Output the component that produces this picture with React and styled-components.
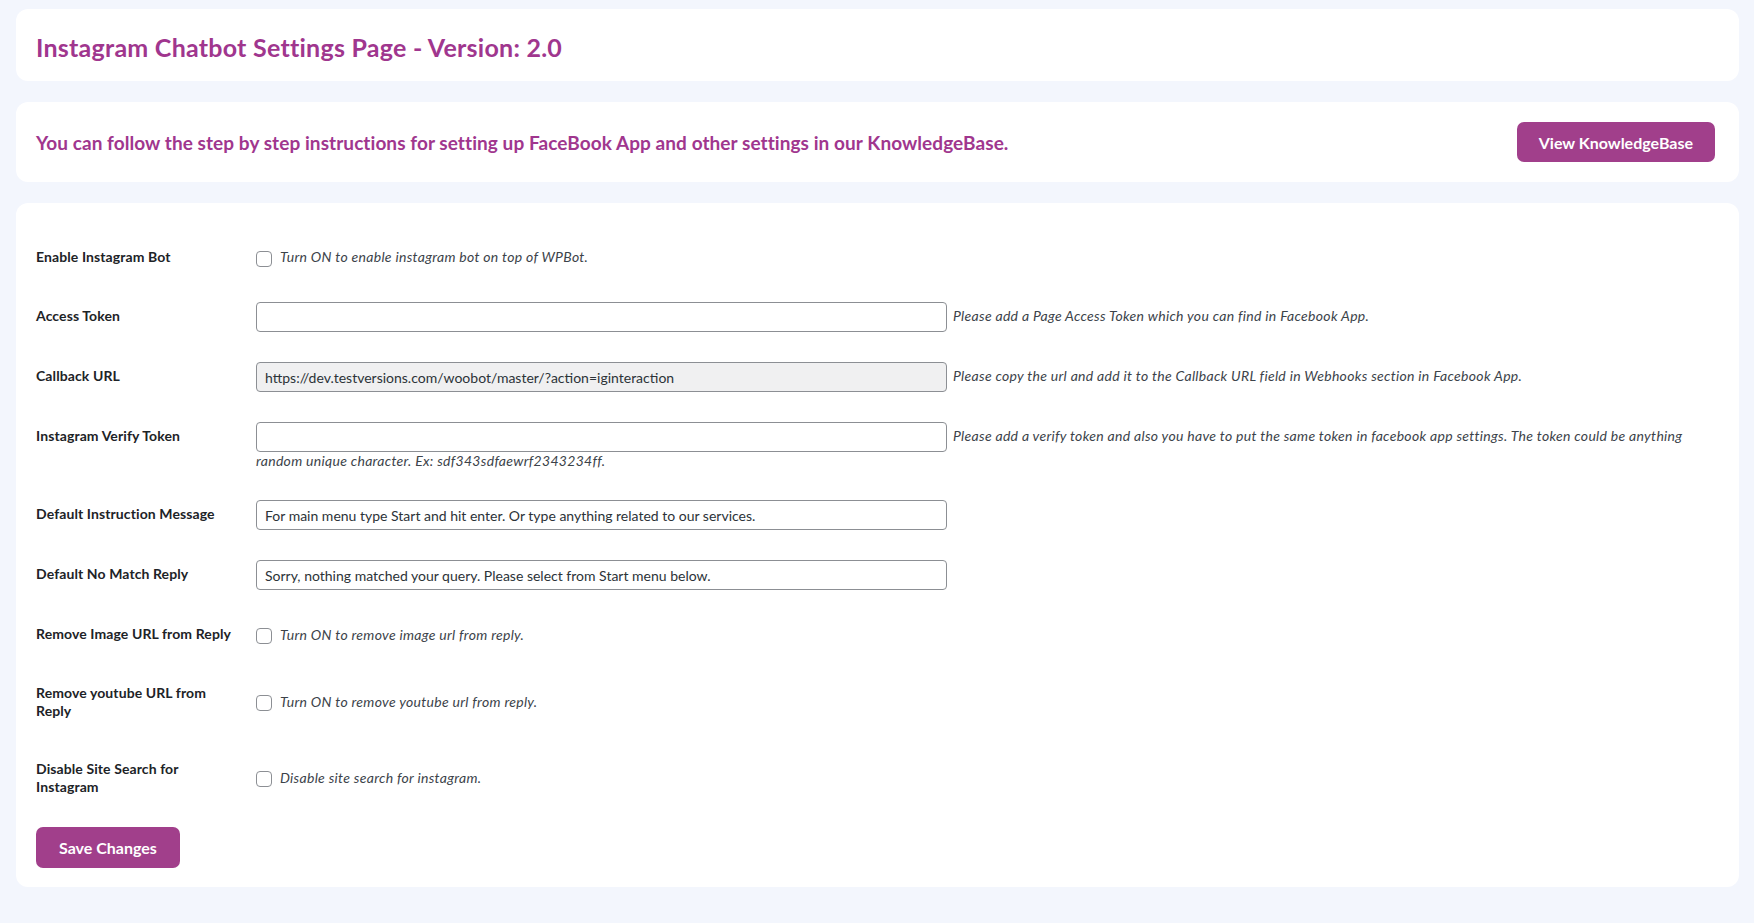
import React from 'react'
import styled, { createGlobalStyle } from 'styled-components'

const GlobalStyle = createGlobalStyle`
  html, body {
    margin: 0;
    padding: 0;
    background: #f3f6fd;
  }
  body {
    font-family: Lato, "Liberation Sans", sans-serif;
    color: #1d2327;
  }
`

const Page = styled.div`
  padding: 9px 15px 40px 16px;
  display: flex;
  flex-direction: column;
  gap: 21px;
`

const Card = styled.div`
  background: #fff;
  border-radius: 12px;
  padding: 0 20px;
`

const HeaderCard = styled(Card)`
  display: flex;
  align-items: center;
  height: 72px;
  box-sizing: border-box;
  padding-top: 3px;
`

const Title = styled.h1`
  margin: 0;
  font-size: 25px;
  letter-spacing: 0.25px;
  font-weight: 700;
  color: #a0368e;
`

const InfoCard = styled(Card)`
  display: flex;
  align-items: center;
  justify-content: space-between;
  height: 80px;
  box-sizing: border-box;
  padding: 0 24px 0 20px;
`

const InfoText = styled.p`
  margin: 0;
  font-size: 19px;
  letter-spacing: 0.07px;
  font-weight: 700;
  color: #a0368e;
`

const PurpleButton = styled.button`
  background: #a13f8b;
  color: #fff;
  border: 0;
  border-radius: 7px;
  font-family: inherit;
  font-size: 16px;
  font-weight: 700;
  height: ${props => props.h || 40}px;
  padding: 0 ${props => props.px || 22}px;
  cursor: pointer;
`

const FormCard = styled(Card)`
  padding: 25px 20px 19px 20px;
`

const FormGrid = styled.div`
  display: grid;
  grid-template-columns: 210px 1fr;
`

const Label = styled.div`
  width: 200px;
  padding: 20px 10px 20px 0;
  font-size: 14px;
  letter-spacing: 0.1px;
  font-weight: 700;
  line-height: 18px;
  align-self: start;
`

const Field = styled.div`
  padding: 15px 10px;
  align-self: center;
  font-size: 14px;
  line-height: 1.3;
`

const CheckLine = styled.label`
  display: flex;
  align-items: center;
  gap: 8px;
  min-height: 29px;
`

const Check = styled.input.attrs({ type: 'checkbox' })`
  appearance: none;
  margin: 2px 0 0 0;
  width: 16px;
  height: 16px;
  border: 1px solid #8c8f94;
  border-radius: 4px;
  background: #fff;
  box-sizing: border-box;
  flex: none;
`

const TextInput = styled.input`
  box-sizing: border-box;
  width: 691px;
  height: 30px;
  padding: 0 8px;
  border: 1px solid #8c8f94;
  border-radius: 4px;
  background: ${props => (props.readOnly ? '#f0f0f1' : '#fff')};
  color: #2c3338;
  font-family: inherit;
  font-size: 14px;
  vertical-align: middle;
  margin: 0;
`

const Description = styled.span`
  font-size: 14px;
  letter-spacing: 0.3px;
  font-style: italic;
  color: #3c434a;
  margin-left: ${props => (props.after ? '6px' : '0')};
`

const SubmitRow = styled.div`
  padding-top: 11px;
`

const rows = [
  { label: 'Enable Instagram Bot', check: true, desc: 'Turn ON to enable instagram bot on top of WPBot.' },
  { label: 'Access Token', value: '', desc: 'Please add a Page Access Token which you can find in Facebook App.' },
  {
    label: 'Callback URL',
    value: 'https://dev.testversions.com/woobot/master/?action=iginteraction',
    readOnly: true,
    desc: 'Please copy the url and add it to the Callback URL field in Webhooks section in Facebook App.',
  },
  {
    label: 'Instagram Verify Token',
    value: '',
    desc: 'Please add a verify token and also you have to put the same token in facebook app settings. The token could be anything random unique character. Ex: sdf343sdfaewrf2343234ff.',
  },
  { label: 'Default Instruction Message', value: 'For main menu type Start and hit enter. Or type anything related to our services.' },
  { label: 'Default No Match Reply', value: 'Sorry, nothing matched your query. Please select from Start menu below.' },
  { label: 'Remove Image URL from Reply', check: true, desc: 'Turn ON to remove image url from reply.' },
  { label: 'Remove youtube URL from Reply', check: true, desc: 'Turn ON to remove youtube url from reply.' },
  { label: 'Disable Site Search for Instagram', check: true, desc: 'Disable site search for instagram.' },
]

const App = () => (
  <>
    <GlobalStyle />
    <Page>
      <HeaderCard>
        <Title>Instagram Chatbot Settings Page - Version: 2.0</Title>
      </HeaderCard>
      <InfoCard>
        <InfoText>
          You can follow the step by step instructions for setting up FaceBook App and other settings in our KnowledgeBase.
        </InfoText>
        <PurpleButton>View KnowledgeBase</PurpleButton>
      </InfoCard>
      <FormCard>
        <FormGrid>
          {rows.map(row => (
            <React.Fragment key={row.label}>
              <Label>{row.label}</Label>
              <Field>
                {row.check ? (
                  <CheckLine>
                    <Check />
                    <Description>{row.desc}</Description>
                  </CheckLine>
                ) : (
                  <>
                    <TextInput defaultValue={row.value} readOnly={row.readOnly} />
                    {row.desc && <Description after>{row.desc}</Description>}
                  </>
                )}
              </Field>
            </React.Fragment>
          ))}
        </FormGrid>
        <SubmitRow>
          <PurpleButton h={41} px={23}>Save Changes</PurpleButton>
        </SubmitRow>
      </FormCard>
    </Page>
  </>
)

export default App
